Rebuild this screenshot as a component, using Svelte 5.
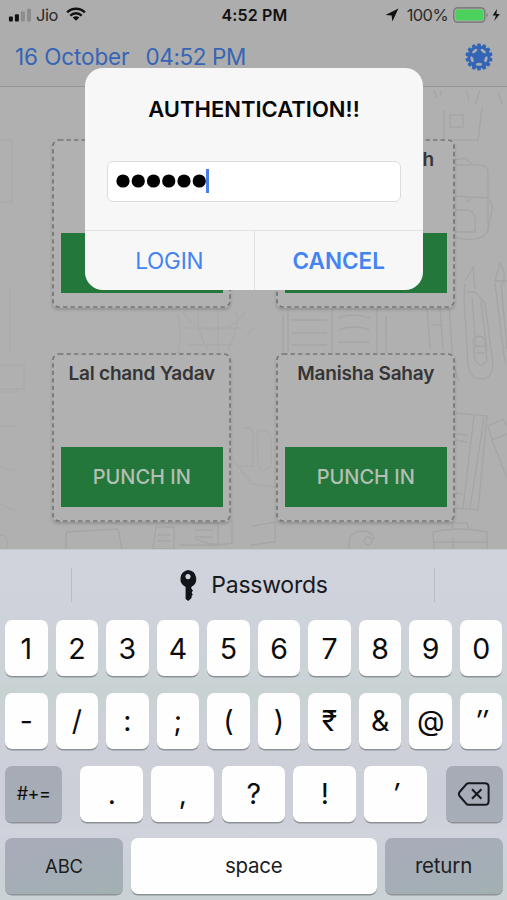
<script>
  const people = [
    { name: '', action: '' },
    { name: 'h', action: '', end: true },
    { name: 'Lal chand Yadav', action: 'PUNCH IN' },
    { name: 'Manisha Sahay', action: 'PUNCH IN' }
  ];
  const digits = ['1', '2', '3', '4', '5', '6', '7', '8', '9', '0'];
  const symbols = ['-', '/', ':', ';', '(', ')', '₹', '&', '@', '″'];
  const marks = ['.', ',', '?', '!', '′'];
  const teeth = Array.from({ length: 14 }, (_, i) => (i * 360) / 14);
  const slots = [36, 108, 180, 252, 324];
</script>

<div class="screen">
  <div class="status">
    <div class="left">
      <svg width="24" height="14" viewBox="0 0 24 14">
        <rect x="0.9" y="8.5" width="4" height="5" rx="1" fill="#111" />
        <rect x="6.9" y="6.2" width="4" height="7.3" rx="1" fill="#111" />
        <rect x="12.9" y="3.5" width="4" height="10" rx="1" fill="#8c8c8c" />
        <rect x="19" y="0.8" width="4" height="12.7" rx="1" fill="#8c8c8c" />
      </svg>
      <span class="carrier">Jio</span>
      <svg class="wifi" width="20" height="14" viewBox="0 0 20 14" fill="none" stroke="#111" stroke-width="2.5">
        <path d="M1.2 5.3C6 0.5 14 .5 18.8 5.3M4.3 8.6C7.6 5.5 12.4 5.5 15.7 8.6" />
        <path d="M6.7 10.5C8.6 8.9 11.4 8.9 13.3 10.5L10 13.8Z" fill="#111" stroke="none" />
      </svg>
    </div>
    <span class="clock">4:52 PM</span>
    <div class="right">
      <svg width="14" height="14" viewBox="0 0 14 14"><path d="M13.4.5L.5 6.9 6.6 7.5l.8 6.1z" fill="#111" /></svg>
      <span class="pct">100%</span>
      <svg width="48" height="16" viewBox="0 0 48 16">
        <rect x="0.8" y="0.8" width="31" height="14.4" rx="3.6" fill="none" stroke="#707070" stroke-width="1.2" />
        <rect x="2.5" y="2.5" width="27.8" height="11" rx="2" fill="#4bd15c" />
        <path d="M33.6 5.5q2 2.5 0 5z" fill="#666" />
        <path d="M44 2L39.6 8.6H43L41.2 14 46.8 7.1H43.4Z" fill="#111" />
      </svg>
    </div>
  </div>

  <div class="header">
    <span class="date">16 October</span>
    <span class="time">04:52 PM</span>
    <svg class="gear" width="28" height="28" viewBox="-14 -14 28 28">
      {#each teeth as a}
        <rect x="-1.9" y="-13.6" width="3.8" height="5" rx="1.3" fill="#3264b7" transform="rotate({a})" />
      {/each}
      <circle r="11.3" fill="#3264b7" />
      {#each slots as a}
        <ellipse cy="-7.3" rx="3.1" ry="1.5" fill="#adadad" transform="rotate({a})" />
      {/each}
    </svg>
  </div>

  <div class="main">
    <svg class="doodles" width="507" height="462" viewBox="0 87 507 462" fill="none" stroke="#a5a5a5" stroke-width="1.3">
      <path d="M434 90l3 8M441 90v6M466 90l3 10M480 90l-5 14M498 92l4 12M450 115h13v12h-13zM444 110v30M444 140h34l4-32" />
      <path d="M455 160l10-2 8 7M454 165h27q7 1 7 8v55q-1 8-9 10-14 4-25-2M455 196l33 2M471 198q-4 8-4 0M455 210h14q6 3 6 10v12h-20M488 199q7 4 2 20l-2 14" />
      <path d="M465 281l8-14 2 22M465 284l-1 14 4 66q2 15 13 15t12-14l-8-62-10-11h-8M472 298l4 50M481 301l6 50M473 340q7-8 12 0l2 20q-6 10-12 0zM476 346h9M476 353h9M495 281l5-18 4 8v14M495 281h12M495 283l10 80M501 283l6 66" />
      <path d="M427 307l3 43M440 307l3 43M449 307l4 56q4 14 6 18M431 325h12" />
      <path d="M288 310v42M283 314v38M332 308v45M377 308v45M338 318q15-6 32 0M338 330q15-6 32 0M292 320h35M292 333h35M292 345h35M338 342h32M386 316v37" />
      <path d="M456 413l31 3-9 94-22-2M474 416l-11 92M484 418l-14 90M457 434l11 1M456 440l11 2M456 493l7 1M488 426l15-7 4 7M488 426l4 14 15-6M492 440l15 38" />
      <path d="M433 532q24-6 54 0v17M433 532l1 17M451 530l2-7h14l2 7M434 542h53M453 538v11M349 549q-2-18 14-18 9 0 11 8M368 537a4 4 0 1 0 .1 0M253 526l22-4v20l-24 3" />
      <path d="M192 523h26v22h-38M195 530h18M195 537h18M232 521v22q-18 4-36-4M156 527h18v22h-21zM158 535h12M158 541h12M66 532l52-3 4 20M66 532v17" />
      <g stroke="#aaa">
        <path d="M178 313q4 25 0 40M183 312c14 22 44 26 62 0M183 328h60M198 312q-2 18 10 38M218 310v40M236 312q4 14-8 38M188 345h46" />
        <path d="M0 140h12v62H0M0 365h24v24H0M0 392h20M0 426h18M0 466l14 5M0 503l15 8M0 535q11 0 6 14M10 290v60" />
        <path d="M243 428q12-3 10 12v26h-13M233 460l18 22M257 431q14-3 14 10v25q-8 8-13 0zM252 484l24 3M247 335l8-8" />
      </g>
    </svg>
    <div class="grid">
      {#each people as p}
        <div class="card">
          <div class="name" class:end={p.end}>{p.name}</div>
          <div class="punch">{p.action}</div>
          <svg class="edge" width="179" height="169">
            <rect x="1" y="1" width="177" height="167" rx="6" fill="none" stroke="#757575" stroke-width="1.7" stroke-dasharray="4.4 3.1" />
          </svg>
        </div>
      {/each}
    </div>
  </div>

  <div class="keyboard">
    <div class="suggest">
      <i></i>
      <div class="pw">
        <svg width="20" height="32" viewBox="0 0 20 32">
          <path fill-rule="evenodd" fill="#111418" d="M10 1a9 9 0 0 1 3.3 17v1.5l1.6 2-1.2 2.2 1.1 2-1.3 1.5.2 1.6L10.3 32 7.6 30V18A9 9 0 0 1 10 1zM10 5a2.6 2.6 0 1 0 .01 0z" />
        </svg>
        <span>Passwords</span>
      </div>
      <i></i>
    </div>
    <div class="rows">
      <div class="row">{#each digits as k}<div class="key">{k}</div>{/each}</div>
      <div class="row">{#each symbols as k}<div class="key sym" class:slant={k === '″'}>{k}</div>{/each}</div>
      <div class="row third">
        <div class="key dark side">#+=</div>
        <div class="marks">{#each marks as k}<div class="key sym" class:slant={k === '′'}>{k}</div>{/each}</div>
        <div class="key dark side">
          <svg width="32" height="24" viewBox="0 0 32 24" fill="none" stroke="#15181d" stroke-width="2" stroke-linejoin="round">
            <path d="M10.5 1.2H27Q30.6 1.2 30.6 4.8V19.2Q30.6 22.8 27 22.8H10.5Q9.3 22.8 8.2 21.7L1.6 14Q.2 12 1.6 10L8.2 2.3Q9.3 1.2 10.5 1.2Z" />
            <path d="M14 7.2l9.4 9.6M23.4 7.2L14 16.8" />
          </svg>
        </div>
      </div>
      <div class="row last">
        <div class="key dark word abc">ABC</div>
        <div class="key word space">space</div>
        <div class="key dark word">return</div>
      </div>
    </div>
  </div>

  <div class="modal">
    <div class="title">AUTHENTICATION!!</div>
    <div class="field">
      <svg width="91" height="14" viewBox="0 0 91 14">
        {#each [0, 1, 2, 3, 4, 5] as n}<circle cx={7 + n * 15.25} cy="7" r="6.6" />{/each}
      </svg>
      <b></b>
    </div>
    <div class="actions">
      <div class="login">LOGIN</div>
      <div class="cancel">CANCEL</div>
    </div>
  </div>
</div>

<style>
  .screen {
    position: relative;
    width: 507px;
    height: 900px;
    overflow: hidden;
    display: flex;
    flex-direction: column;
    background: #b0b0b0;
    font-family: Inter, 'Liberation Sans', sans-serif;
    color: #111;
    white-space: nowrap;
  }
  svg { display: block; flex: none; }
  .status {
    height: 29px;
    box-sizing: border-box;
    padding: 1px 6px 0 8px;
    display: grid;
    grid-template-columns: 1fr auto 1fr;
    align-items: center;
    background: #adadad;
    font-size: 16.5px;
  }
  .left, .right { display: flex; align-items: center; }
  .right { justify-content: flex-end; }
  .left svg { margin-top: -1px; }
  .carrier { margin-left: 4px; color: #2b2b2b; letter-spacing: -0.5px; }
  .left .wifi { margin-left: 8px; margin-top: -2px; }
  .clock { font-weight: 600; font-size: 16px; letter-spacing: 0.15px; }
  .pct { margin: 0 5px 0 8px; color: #2b2b2b; font-size: 16.5px; letter-spacing: -0.6px; }
  .header {
    height: 58px;
    box-sizing: border-box;
    border-bottom: 1px solid #959595;
    background: #adadad;
    padding: 0 14px 2px 15px;
    display: flex;
    align-items: center;
    font-size: 22.5px;
    letter-spacing: -0.1px;
    color: #3565b5;
  }
  .date { width: 130.5px; }
  .time { letter-spacing: -0.4px; }
  .gear { margin-left: auto; }
  .main { height: 462px; position: relative; flex: none; }
  .doodles { position: absolute; left: 0; top: 0; }
  .grid {
    position: relative;
    padding: 51.5px 52px 0 52px;
    display: grid;
    grid-template-columns: 179px 179px;
    justify-content: space-between;
    row-gap: 45px;
  }
  .card {
    position: relative;
    height: 169px;
    box-sizing: border-box;
    border-radius: 6px;
    padding: 2px 8px 0 8.5px;
    background: #b1b1b1;
    box-shadow: 0 2px 3px rgba(0, 0, 0, 0.16);
  }
  .edge { position: absolute; left: 0; top: 0; }
  .name {
    height: 92.5px;
    box-sizing: border-box;
    padding-top: 7px;
    line-height: 24px;
    text-align: center;
    font-size: 19px;
    font-weight: 600;
    letter-spacing: -0.2px;
    color: #353535;
  }
  .name.end { text-align: right; padding-right: 13px; }
  .punch {
    height: 60px;
    line-height: 61px;
    text-align: center;
    background: #23773a;
    color: #b4bfb5;
    font-size: 20px;
    font-weight: 500;
  }
  .keyboard {
    height: 351px;
    box-sizing: border-box;
    background: linear-gradient(#d0d3dc 0%, #ced2da 22%, #cbd3d7 34%, #c8d2d2 41%, #ced1d9 51%, #cccfd7 70%, #d0d2dc 81%, #cbd1d7 91%, #c9d2d4 100%);
    border-top: 1px solid #c4c6cc;
  }
  .suggest {
    height: 70px;
    padding: 0 72px 0 71px;
    display: flex;
    align-items: center;
    justify-content: space-between;
    box-sizing: border-box;
  }
  .suggest i { width: 1px; height: 34px; background: #b9bdc4; }
  .pw { display: flex; align-items: center; gap: 13px; font-size: 23px; letter-spacing: -0.25px; color: #17191e; }
  .rows { padding: 0 4.5px 0 5px; display: flex; flex-direction: column; gap: 16px; }
  .row { display: flex; gap: 8px; height: 56.8px; }
  .key {
    flex: 1 1 0;
    min-width: 0;
    height: 56px;
    display: flex;
    align-items: center;
    justify-content: center;
    background: #fefefe;
    border-radius: 7px;
    box-shadow: 0 1.5px 0.5px #8e9297;
    font-size: 28.5px;
    color: #0c0c0c;
  }
  .slant { font-style: italic; }
  .dark { background: linear-gradient(#a6abb6, #a7aeb7); }
  .third { justify-content: space-between; }
  .side { flex: 0 0 57px; font-size: 18px; letter-spacing: -0.6px; }
  .marks { display: flex; width: 347px; gap: 8px; }
  .word { font-size: 20.5px; letter-spacing: -0.2px; color: #1b1d21; padding-bottom: 1px; box-sizing: border-box; }
  .last .dark { background: linear-gradient(165deg, #a7acb8 20%, #a2b0b3); flex: 0 0 118px; }
  .last .abc { font-size: 18.5px; }
  .modal {
    position: absolute;
    left: 85px;
    top: 68px;
    width: 338px;
    height: 221.5px;
    border-radius: 18px;
    background: #f7f7f7;
    display: flex;
    flex-direction: column;
    overflow: hidden;
  }
  .title {
    padding-top: 27px;
    line-height: 29px;
    text-align: center;
    font-size: 22px;
    font-weight: 600;
    color: #080808;
  }
  .field {
    margin: 37px 22px 0;
    height: 41px;
    box-sizing: border-box;
    border: 1px solid #dcdcdc;
    border-radius: 6px;
    background: #fff;
    padding-left: 8px;
    display: flex;
    align-items: center;
  }
  .field b { width: 2.5px; height: 24px; background: #4b7df0; margin-left: -1px; }
  .actions {
    margin-top: 28px;
    flex: 1;
    border-top: 1px solid #e1e1e1;
    display: flex;
    color: #4483f2;
    font-size: 22.5px;
    line-height: 59px;
    text-align: center;
  }
  .login { flex: 1; border-right: 1px solid #e1e1e1; letter-spacing: -0.2px; }
  .cancel { flex: 1; font-weight: 600; }
</style>
